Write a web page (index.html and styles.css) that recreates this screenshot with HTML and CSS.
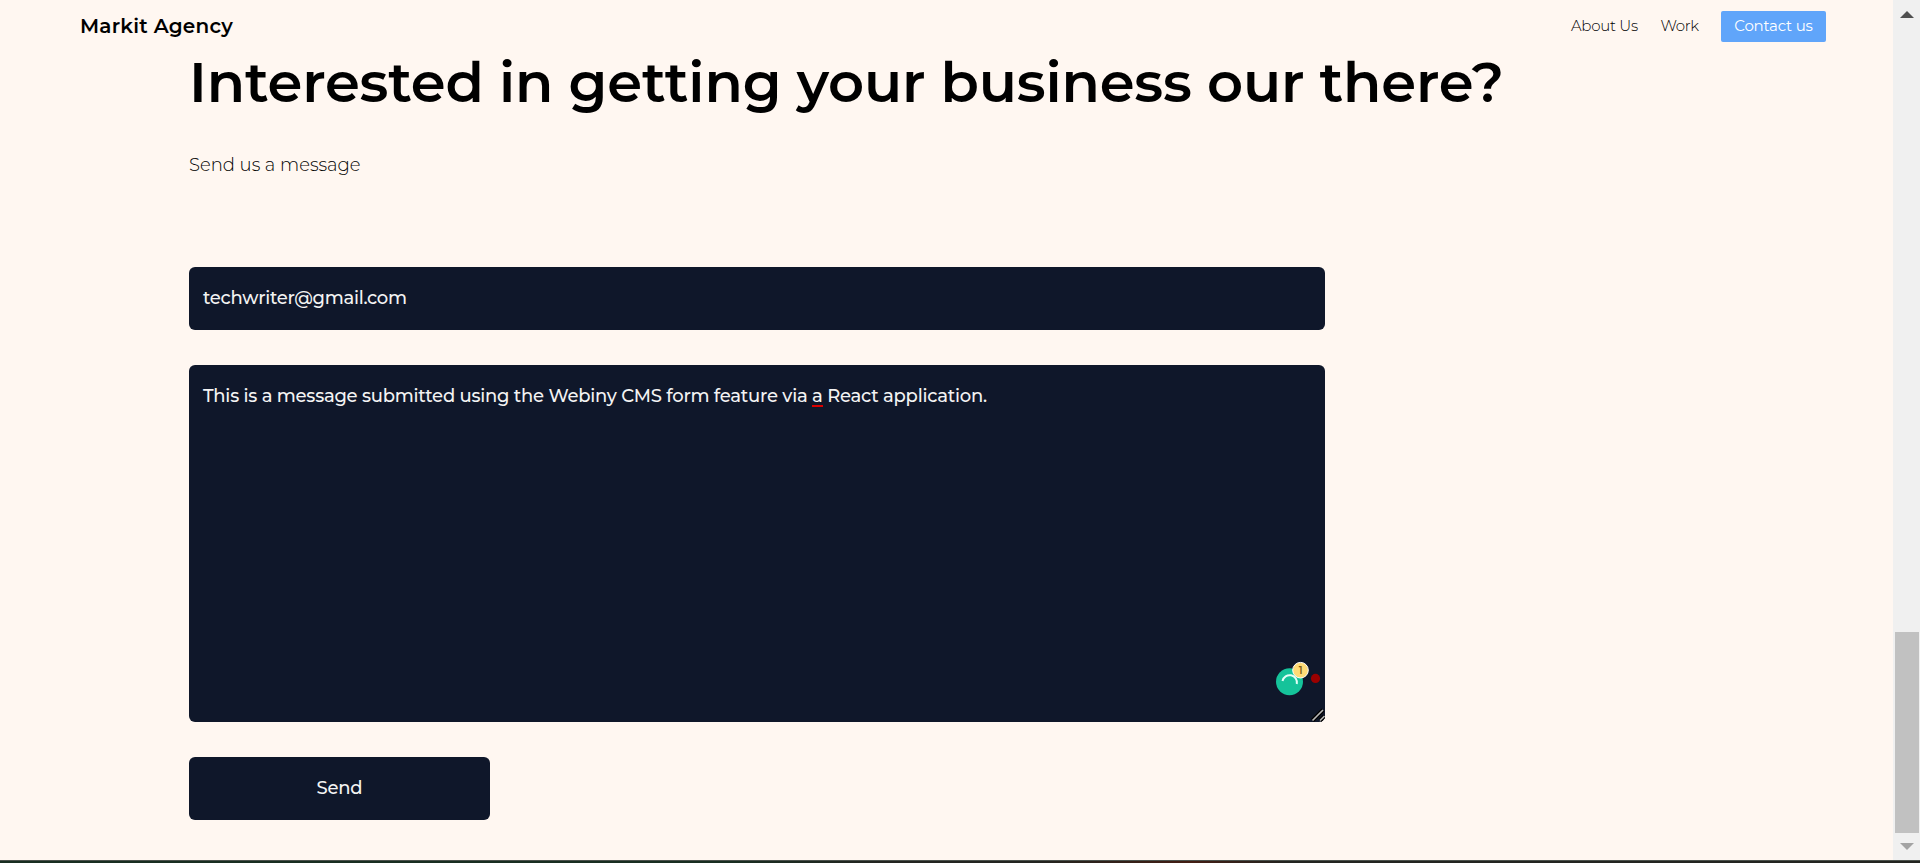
FILE: index.html
```html
<!DOCTYPE html>
<html lang="en">
<head>
<meta charset="utf-8">
<title>Markit Agency</title>
<link rel="stylesheet" href="styles.css">
</head>
<body>
<div class="window">
  <div class="page">
    <header class="navbar">
      <div class="brand">Markit Agency</div>
      <nav class="links">
        <a class="link about">About Us</a>
        <a class="link work">Work</a>
        <a class="contact"><span>Contact us</span></a>
      </nav>
    </header>
    <main class="content">
      <h1 class="title">Interested in getting your business our there?</h1>
      <p class="subtitle">Send us a message</p>
      <form class="form">
        <div class="field email"><span class="email-text">techwriter@gmail.com</span></div>
        <div class="field message">
          <span class="message-text">This is a message submitted using the Webiny CMS form feature via <span class="typo">a</span> React application.</span>
          <svg class="assistant" width="60" height="66" viewBox="0 0 60 66">
            <circle cx="24.5" cy="25.7" r="13.5" fill="#15c39a"/>
            <path d="M17.5 25a7.3 7.3 0 1 1 14.3 3" fill="none" stroke="#e4fff8" stroke-width="2"/>
            <circle cx="35.5" cy="14.2" r="7.8" fill="#ffdb76" stroke="#fff" stroke-width="1"/>
            <text class="count" x="35.5" y="17.5" text-anchor="middle">1</text>
            <circle cx="50.5" cy="22.4" r="4.6" fill="#9b0000"/>
            <path d="M47.5 64.5L58 54M55 64.5L59.5 60" stroke="#000" stroke-width="4"/>
            <path d="M47.5 64.5L58 54M55 64.5L59.5 60" stroke="#b8b8b8" stroke-width="1.6"/>
          </svg>
        </div>
        <button class="field send" type="button"><span>Send</span></button>
      </form>
    </main>
  </div>
  <div class="scrollbar">
    <svg class="arrow" width="14" height="7" viewBox="0 0 14 7"><path d="M0 7L7 0L14 7Z" fill="#505050"/></svg>
    <div class="thumb"></div>
    <svg class="arrow" width="14" height="7" viewBox="0 0 14 7"><path d="M0 0L7 7L14 0Z" fill="#a3a3a3"/></svg>
  </div>
</div>
<div class="edge"></div>
</body>
</html>
```
FILE: styles.css
```css
* { box-sizing: border-box; }
body { margin: 0; height: 863px; overflow: hidden; background: #fff7f1; color: #000; font-family: Montserrat, Inter, sans-serif; }
.window { display: flex; height: 860px; }
.page { flex: 1; }
.navbar { display: flex; justify-content: space-between; align-items: flex-start; height: 52px; padding: 11px 67px 0 80px; }
.brand { font-size: 20px; font-weight: 600; line-height: 30px; letter-spacing: 0.23px; white-space: nowrap; }
.links { display: flex; }
.link { font-size: 15px; font-weight: 300; line-height: 29px; white-space: nowrap; }
.about { width: 89.5px; letter-spacing: -0.25px; }
.work { width: 60.5px; letter-spacing: -0.35px; }
.contact { width: 105px; height: 31px; border-radius: 2px; background: #60a5fa; color: #fff; font-size: 15px; line-height: 29px; text-align: center; letter-spacing: -0.2px; white-space: nowrap; }
.content { padding-left: 189px; }
.title { margin: 0; font-size: 56px; font-weight: 600; line-height: 60px; letter-spacing: -0.17px; white-space: nowrap; }
.subtitle { margin: 37px 0 0; font-size: 18px; font-weight: 300; line-height: 32px; letter-spacing: 0; }
.form { display: flex; flex-direction: column; gap: 35px; margin-top: 86px; }
.field { width: 1136px; border: 0; border-radius: 6px; background: #0f172a; color: #f3f3f3; font-family: inherit; font-size: 18px; font-weight: 500; letter-spacing: -0.24px; white-space: nowrap; }
.email { height: 63px; padding-left: 14px; line-height: 62px; letter-spacing: -0.27px; }
.message { position: relative; height: 357px; padding: 15px 14px; line-height: 32px; }
.typo { box-shadow: 0 -2px 0 #d90000 inset; }
.assistant { position: absolute; right: 0; bottom: 0; }
.count { font-size: 10px; font-weight: 600; fill: #805b13; }
.send { width: 301px; height: 63px; padding: 0 0 1px; line-height: 60px; text-align: center; }
.scrollbar { display: flex; flex-direction: column; align-items: center; width: 27px; padding: 11px 0 10px; background: #f0f0f0; }
.thumb { width: 24px; height: 201px; margin: 614px 0 10px 1px; background: #c1c1c1; }
.arrow { flex: none; }
.edge { height: 3px; border-top: 1px solid #4b514b; background: linear-gradient(90deg, #182d20 0 38%, #22241f 46% 54%, #2c211a 57%, #431d12 62%, #22241f 67%); }
```
